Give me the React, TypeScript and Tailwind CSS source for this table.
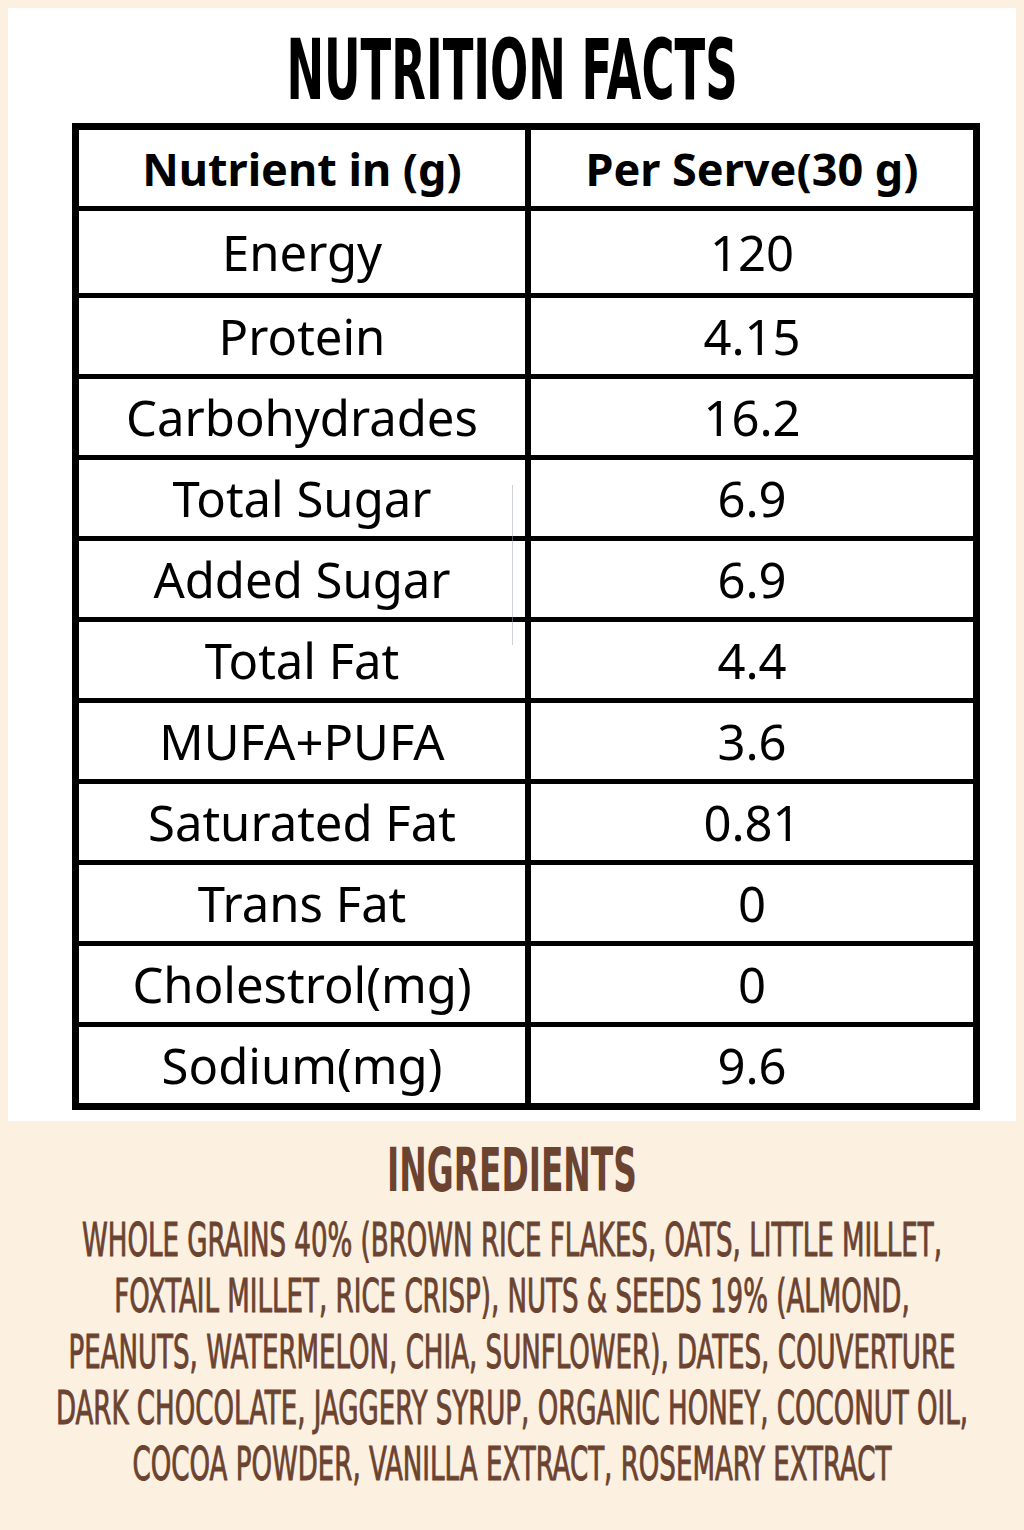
const rows: [string, string][] = [
  ['Energy', '120'],
  ['Protein', '4.15'],
  ['Carbohydrades', '16.2'],
  ['Total Sugar', '6.9'],
  ['Added Sugar', '6.9'],
  ['Total Fat', '4.4'],
  ['MUFA+PUFA', '3.6'],
  ['Saturated Fat', '0.81'],
  ['Trans Fat', '0'],
  ['Cholestrol(mg)', '0'],
  ['Sodium(mg)', '9.6'],
]

const ingredientLines = [
  'WHOLE GRAINS 40% (BROWN RICE FLAKES, OATS, LITTLE MILLET,',
  'FOXTAIL MILLET, RICE CRISP), NUTS & SEEDS 19% (ALMOND,',
  'PEANUTS, WATERMELON, CHIA, SUNFLOWER), DATES, COUVERTURE',
  'DARK CHOCOLATE, JAGGERY SYRUP, ORGANIC HONEY, COCONUT OIL,',
  'COCOA POWDER, VANILLA EXTRACT, ROSEMARY EXTRACT',
]

function NutritionTable() {
  return (
    <div className="relative ml-[64px] w-[908px] border-[7px] border-black font-['Noto_Sans',sans-serif] text-black">
      <div className="flex h-[76px]">
        <div className="flex w-[452px] items-center justify-center border-r-[6px] border-black text-[45px] font-bold leading-none">
          Nutrient in (g)
        </div>
        <div className="flex flex-1 items-center justify-center text-[45px] font-bold leading-none">
          Per Serve(30 g)
        </div>
      </div>
      {rows.map(([name, value], i) => (
        <div key={name} className={i === 0 ? 'flex h-[87px] border-t-[5px] border-black' : 'flex h-[81px] border-t-[5px] border-black'}>
          <div className="flex w-[452px] items-center justify-center border-r-[6px] border-black text-[49px] leading-none">
            {name}
          </div>
          <div className="flex flex-1 items-center justify-center text-[49px] leading-none">{value}</div>
        </div>
      ))}
      {/* faint scan line left over in the artwork */}
      <div className="absolute left-[433px] top-[355px] h-[160px] w-px bg-gray-400/50" />
    </div>
  )
}

export default function App() {
  return (
    <div className="min-h-[1530px] w-[1024px] bg-[#fcf0e1] pt-[8px]">
      <div className="mx-[8px] h-[1113px] bg-white">
        <div className="flex h-[115px] items-center justify-center pt-[10px]">
          <h1 className="inline-block scale-y-[1.67] font-['Liberation_Sans_Narrow','DejaVu_Sans_Condensed',sans-serif] text-[50px] font-bold leading-none text-black">
            NUTRITION FACTS
          </h1>
        </div>
        <NutritionTable />
      </div>

      <div className="pt-[22px] font-['Liberation_Sans_Narrow','DejaVu_Sans_Condensed',sans-serif] text-[#6b4331]">
        <div className="flex h-[56px] items-center justify-center">
          <h2 className="inline-block scale-y-[1.65] text-[36.5px] font-bold leading-none">INGREDIENTS</h2>
        </div>
        <div className="mt-[13px] flex flex-col">
          {ingredientLines.map((line) => (
            <div key={line} className="flex h-[56px] items-center justify-center whitespace-nowrap">
              <span className="inline-block scale-y-[1.58] text-[29px] leading-none [-webkit-text-stroke:0.6px_#6b4331]">
                {line}
              </span>
            </div>
          ))}
        </div>
      </div>
    </div>
  )
}
